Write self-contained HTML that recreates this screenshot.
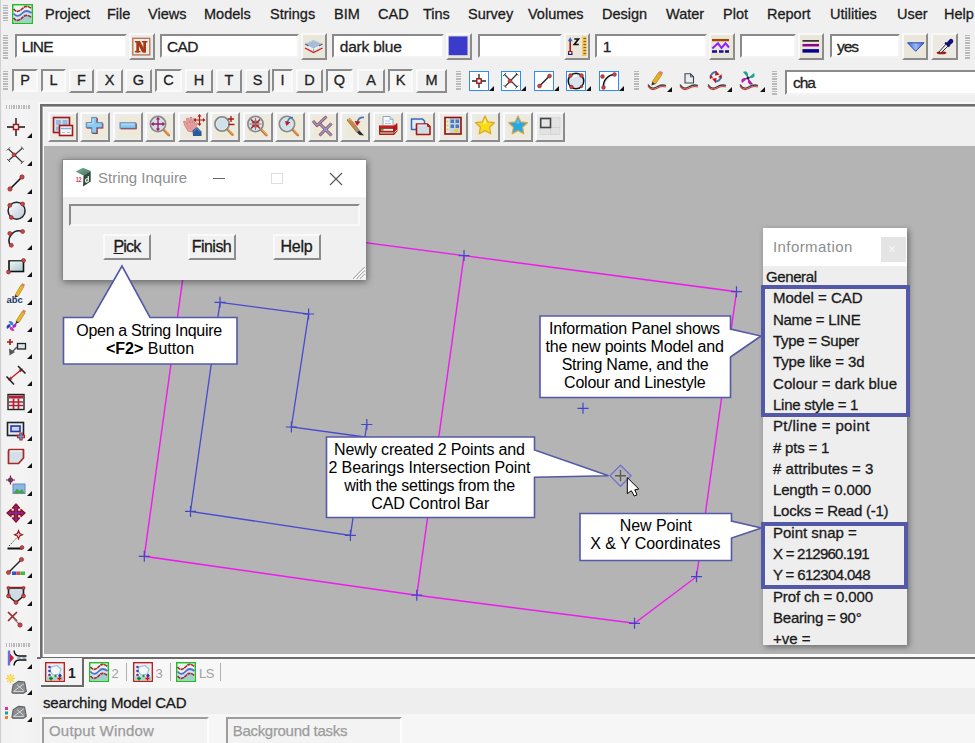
<!DOCTYPE html>
<html>
<head>
<meta charset="utf-8">
<style>
html,body{margin:0;padding:0;}
body{width:975px;height:743px;overflow:hidden;position:relative;background:#f0f0f0;font-family:"Liberation Sans",sans-serif;color:#1a1a1a;}
.abs{position:absolute;}
.menu{position:absolute;top:5px;font-size:14.5px;line-height:18px;color:#1c1c1c;white-space:nowrap;-webkit-text-stroke:0.3px #1c1c1c;}
.inp{position:absolute;box-sizing:border-box;background:#fff;border:2px solid;border-color:#8a8a8a #f4f4f4 #f4f4f4 #8a8a8a;font-size:15.5px;line-height:22px;padding-left:5px;color:#222;white-space:nowrap;overflow:hidden;-webkit-text-stroke:0.3px #222;}
.btn{position:absolute;box-sizing:border-box;background:#eae6d9;border:2px solid;border-color:#f8f8f8 #8c8c8c #8c8c8c #f8f8f8;}
.kb{position:absolute;box-sizing:border-box;top:69px;height:24px;background:#f1f1f1;border:2px solid;border-color:#fafafa #8c8c8c #8c8c8c #fafafa;font-size:14.5px;line-height:18px;text-align:center;color:#222;-webkit-text-stroke:0.3px #222;}
.kb.dn{border-color:#8c8c8c #fafafa #fafafa #8c8c8c;background:#f6f6f6;height:23px;}
.grip{position:absolute;background:repeating-linear-gradient(to bottom,#b8b8b8 0 1.200px,transparent 1.200px 2.500px);}
.gripv{position:absolute;background:repeating-linear-gradient(to right,#b8b8b8 0 1.200px,transparent 1.200px 2.500px);}
.tri{position:absolute;width:0;height:0;border-left:5px solid transparent;border-bottom:5px solid #111;}
.dbtn{position:absolute;top:234px;height:26px;box-sizing:border-box;background:#f1f1f1;border:2px solid;border-color:#fafafa #8c8c8c #8c8c8c #fafafa;font-size:16px;line-height:21px;text-align:center;color:#1a1a1a;-webkit-text-stroke:0.3px #1a1a1a;}
.irow{position:absolute;left:773px;font-size:15px;line-height:20px;color:#1a1a1a;white-space:nowrap;-webkit-text-stroke:0.3px #1a1a1a;}
.ct{font-family:"Liberation Sans",sans-serif;font-size:16px;fill:#000;text-anchor:middle;}
.vb::before{content:"";position:absolute;left:2.5px;top:1.5px;width:22px;height:22px;background:#eeead9;}
.vb{position:absolute;top:112px;width:30px;height:30px;box-sizing:border-box;background:#ebebeb;border:2px solid;border-color:#fbfbfb #8c8c8c #8c8c8c #fbfbfb;}
.vb.nb::before{display:none;}
.vb svg{position:absolute;left:0;top:-1px;}
</style>
</head>
<body>
<div class="abs" style="left:0;top:0;width:1px;height:743px;background:#cfcfcf;z-index:5;"></div>
<!-- MENU -->
<div id="menubar">
<div class="grip" style="left:3px;top:5px;width:5px;height:17px;"></div>
<div class="abs" style="left:12px;top:4px;width:21px;height:20px;"><svg width="21" height="20" viewBox="0 0 20 20" preserveAspectRatio="none"><rect x="0.700" y="0.700" width="18.600" height="18.600" fill="#eef2f4" stroke="#1fbf1f" stroke-width="1.400"/><path d="M1.500 14 C4 17.500 7 17 10 13.500 S16 11.500 18.500 13.500 V18.500 H1.500Z" fill="#9fd0cc"/><path d="M1.500 9.500 C4 13 7 12.500 10 9 S16 7 18.500 9 V13 C16 11 13 11 10 13.500 S4 17 1.500 14Z" fill="#cfe4f4"/><path d="M1.500 5 C4 8.500 7 8 10 4.500 S16 2.500 18.500 4.500" fill="none" stroke="#a03030" stroke-width="1.600" stroke-dasharray="3.500 0.500"/><path d="M1.500 9.500 C4 13 7 12.500 10 9 S16 7 18.500 9" fill="none" stroke="#5070c8" stroke-width="1.700"/><path d="M1.500 14 C4 17.500 7 17 10 13.500 S16 11.500 18.500 13.500" fill="none" stroke="#a03030" stroke-width="1.600" stroke-dasharray="3.500 0.500"/></svg></div>
<span class="menu" style="left:45px">Project</span>
<span class="menu" style="left:107px">File</span>
<span class="menu" style="left:148px">Views</span>
<span class="menu" style="left:204px">Models</span>
<span class="menu" style="left:270px">Strings</span>
<span class="menu" style="left:334px">BIM</span>
<span class="menu" style="left:378px">CAD</span>
<span class="menu" style="left:423px">Tins</span>
<span class="menu" style="left:468px">Survey</span>
<span class="menu" style="left:528px">Volumes</span>
<span class="menu" style="left:602px">Design</span>
<span class="menu" style="left:666px">Water</span>
<span class="menu" style="left:723px">Plot</span>
<span class="menu" style="left:767px">Report</span>
<span class="menu" style="left:830px">Utilities</span>
<span class="menu" style="left:897px">User</span>
<span class="menu" style="left:944px">Help</span>
</div>
<!-- CONTROL BAR ROW -->
<div id="row2">
<div class="grip" style="left:3px;top:35px;width:5px;height:24px;"></div>
<div class="inp" style="left:15px;top:34px;width:112px;height:24px;letter-spacing:-0.93px;padding-left:4.8px;">LINE</div>
<div class="btn" style="left:129px;top:33px;width:26px;height:27px;background:#ebebeb;"><svg class="abs" style="left:0;top:0" width="22" height="23" viewBox="0 0 22 23"><rect x="1.800" y="3.300" width="17" height="16.600" fill="#e6edf2" stroke="#c0703f" stroke-width="1.300"/><g fill="#a93a10"><rect x="5.300" y="6" width="2.700" height="11.400"/><rect x="12.300" y="6" width="2.700" height="11.400"/><path d="M5.300 6 H9 L15 17.400 H11.300 Z"/><rect x="3.900" y="6" width="5" height="1.500"/><rect x="3.900" y="15.900" width="5.500" height="1.500"/><rect x="10.900" y="6" width="5.500" height="1.500"/></g></svg></div>
<div class="inp" style="left:160px;top:34px;width:139px;height:24px;letter-spacing:-0.70px;padding-left:5.0px;">CAD</div>
<div class="btn" style="left:301px;top:33px;width:26px;height:27px;"><svg class="abs" style="left:0;top:0" width="22" height="23" viewBox="0 0 22 23"><path d="M2 13 L10.500 17.500 L19.500 13" fill="none" stroke="#d01818" stroke-width="1.300"/><path d="M2 11 L10.500 15 L19.500 11 L10.500 7.500Z" fill="#e8f0f8"/><path d="M2 9 L10.500 5 L19.500 9 L10.500 13.500 Z" fill="#a8bcd4"/><path d="M2 9 L10.500 5 L19.500 9" fill="none" stroke="#c8d8e8" stroke-width="0.800"/><path d="M2 9 L5.500 10.800 M19.500 9 L16 10.800" stroke="#5a6a7a" stroke-width="1.300"/><path d="M10.500 13.500V17" stroke="#7aa0c0" stroke-width="0.800"/></svg></div>
<div class="inp" style="left:332px;top:34px;width:112px;height:24px;letter-spacing:-0.22px;padding-left:5.8px;">dark blue</div>
<div class="btn" style="left:446px;top:33px;width:26px;height:27px;"><svg class="abs" style="left:0;top:0" width="22" height="23" viewBox="0 0 22 23"><rect x="0.700" y="1.400" width="18.800" height="18.800" fill="#3b3bcb"/></svg></div>
<div class="inp" style="left:478px;top:34px;width:84px;height:24px;"></div>
<div class="btn" style="left:564px;top:33px;width:26px;height:27px;"><svg class="abs" style="left:0;top:0" width="22" height="23" viewBox="0 0 22 23"><path d="M4.200 6 V16" stroke="#b01818" stroke-width="1.600"/><path d="M4.200 2.300 L1.800 6.300 H6.600 Z" fill="#2868c8"/><rect x="2" y="16" width="4.500" height="2" fill="#b01818"/><rect x="2" y="18" width="4.500" height="2" fill="#1010a0"/><rect x="3.300" y="17" width="1.900" height="2" fill="#e8f0f0"/><path d="M8.300 4 H12.500 L8.300 9.500 H12.800" fill="none" stroke="#111" stroke-width="1.700"/><rect x="16.300" y="1.500" width="4" height="19.500" fill="#f0c050"/><path d="M17.500 3.500h2.800M17.500 6.500h2.800M17.500 9.500h2.800M17.500 12.500h2.800M17.500 15.500h2.800M17.500 18.500h2.800" stroke="#7a5a10" stroke-width="0.900"/></svg></div>
<div class="inp" style="left:595px;top:34px;width:112px;height:24px;letter-spacing:0.00px;padding-left:5.8px;">1</div>
<div class="btn" style="left:709px;top:33px;width:26px;height:27px;"><svg class="abs" style="left:0;top:0" width="22" height="23" viewBox="0 0 22 23"><path d="M1 5.100 H18" stroke="#a04800" stroke-width="2.300"/><path d="M1.300 13.500 L7 8.300 L10.500 13 L14.500 8.300 L18 12.500" fill="none" stroke="#9020ff" stroke-width="2"/><path d="M1 16.600 H6 M8 16.600 H12.500 M14 16.600 H18" stroke="#10108a" stroke-width="2.500"/></svg></div>
<div class="inp" style="left:740px;top:34px;width:56px;height:24px;"></div>
<div class="btn" style="left:798px;top:33px;width:26px;height:27px;"><svg class="abs" style="left:0;top:0" width="22" height="23" viewBox="0 0 22 23"><path d="M2.500 5.900 H19" stroke="#222" stroke-width="1.600"/><path d="M2.500 10.200 H19" stroke="#900090" stroke-width="2.500"/><path d="M2.500 15.900 H19" stroke="#000090" stroke-width="3.500"/></svg></div>
<div class="inp" style="left:830px;top:34px;width:70px;height:24px;letter-spacing:-1.10px;padding-left:5.0px;">yes</div>
<div class="btn" style="left:902px;top:33px;width:26px;height:27px;"><svg class="abs" style="left:0;top:0" width="22" height="23" viewBox="0 0 22 23"><defs><linearGradient id="tg" x1="0" y1="0" x2="1" y2="0"><stop offset="0" stop-color="#3a66d8"/><stop offset="0.500" stop-color="#9ab8f4"/><stop offset="1" stop-color="#3a66d8"/></linearGradient></defs><path d="M3.500 7.800 H20 L11.700 16.300 Z" fill="url(#tg)" stroke="#2848b0" stroke-width="1" stroke-linejoin="round"/></svg></div>
<div class="btn" style="left:931px;top:33px;width:27px;height:27px;background:#ece9e2;"><svg class="abs" style="left:0;top:0" width="23" height="23" viewBox="0 0 23 23"><ellipse cx="8.500" cy="17.700" rx="4.800" ry="1.500" fill="#b01818"/><path d="M6 17 L13.500 8.500 L15.500 10.500 L8 18 Z" fill="#e4ecf0" stroke="#333" stroke-width="1"/><path d="M12.200 7.500 L16.500 11.500" stroke="#10106a" stroke-width="2.200"/><path d="M13.500 8 L16.500 4.500 Q18.500 3 20 5 Q21 7 19.500 8 L16.200 10.800 Z" fill="#10107a"/></svg></div>
<div class="grip" style="left:965px;top:35px;width:5px;height:24px;"></div>
</div>
<!-- ROW 3 -->
<div id="row3">
<div class="grip" style="left:3px;top:71px;width:5px;height:19px;"></div>
<div class="kb dn" style="left:12px;width:26px;">P</div>
<div class="kb dn" style="left:41px;width:25px;">L</div>
<div class="kb" style="left:69px;width:25px;">F</div>
<div class="kb" style="left:96px;width:27px;">X</div>
<div class="kb" style="left:125px;width:27px;">G</div>
<div class="kb dn" style="left:155px;width:27px;">C</div>
<div class="kb" style="left:185px;width:28px;">H</div>
<div class="kb" style="left:216px;width:26px;">T</div>
<div class="kb" style="left:245px;width:25px;">S</div>
<div class="kb dn" style="left:272px;width:21px;">I</div>
<div class="kb" style="left:296px;width:27px;">D</div>
<div class="kb dn" style="left:326px;width:27px;">Q</div>
<div class="kb" style="left:357px;width:28px;">A</div>
<div class="kb dn" style="left:388px;width:25px;">K</div>
<div class="kb" style="left:416px;width:31px;">M</div>
<div class="grip" style="left:456px;top:71px;width:5px;height:19px;"></div>
<div class="abs" style="left:468.5px;top:71px;width:20px;height:20px;box-sizing:border-box;border:1px solid #2f8cf7;background:#fff;"><svg class="abs" style="left:0;top:0" width="18" height="18" viewBox="0 0 18 18"><path d="M2 9h14M9 2v14" stroke="#222" stroke-width="1.300"/><rect x="6.800" y="6.800" width="4.400" height="4.400" fill="#fff" stroke="#a01010" stroke-width="1.400"/></svg></div><div class="tri" style="left:488.5px;top:86px;"></div><div class="abs" style="left:501px;top:71px;width:20px;height:20px;box-sizing:border-box;border:1px solid #2f8cf7;background:#fff;"><svg class="abs" style="left:0;top:0" width="18" height="18" viewBox="0 0 18 18"><path d="M2.500 2.500 L15 15 M15 2 L3 14.500" stroke="#333" stroke-width="1.200"/><path d="M13.500 0.500l3 3M1 4l3-3M1.500 13l3 3M13.500 16.500l3-3" stroke="#444" stroke-width="0.900"/><circle cx="8" cy="9" r="2" fill="#c04848" stroke="#8a2020" stroke-width="0.500"/></svg></div><div class="tri" style="left:521px;top:86px;"></div><div class="abs" style="left:533.5px;top:71px;width:20px;height:20px;box-sizing:border-box;border:1px solid #2f8cf7;background:#fff;"><svg class="abs" style="left:0;top:0" width="18" height="18" viewBox="0 0 18 18"><path d="M4.500 14 L14.500 4" stroke="#222" stroke-width="1.400"/><circle cx="4.5" cy="14" r="2" fill="#c04848" stroke="#8a2020" stroke-width="0.500"/><circle cx="14.5" cy="4" r="2" fill="#c04848" stroke="#8a2020" stroke-width="0.500"/></svg></div><div class="tri" style="left:553.5px;top:86px;"></div><div class="abs" style="left:566px;top:71px;width:20px;height:20px;box-sizing:border-box;border:1px solid #2f8cf7;background:#fff;"><svg class="abs" style="left:0;top:0" width="18" height="18" viewBox="0 0 18 18"><circle cx="9" cy="9" r="7.800" fill="#dbe4ec" stroke="#111" stroke-width="1.500"/><path d="M5 6 A5 5 0 0 1 10 4" stroke="#fff" stroke-width="1.600" fill="none"/><circle cx="3.5" cy="3.5" r="1.9" fill="#c04848" stroke="#8a2020" stroke-width="0.500"/><circle cx="14.5" cy="3.5" r="1.9" fill="#c04848" stroke="#8a2020" stroke-width="0.500"/><circle cx="4.5" cy="15" r="1.9" fill="#c04848" stroke="#8a2020" stroke-width="0.500"/><circle cx="14.5" cy="14.5" r="1.3" fill="#c04848" stroke="#8a2020" stroke-width="0.500"/></svg></div><div class="tri" style="left:586px;top:86px;"></div><div class="abs" style="left:599px;top:71px;width:20px;height:20px;box-sizing:border-box;border:1px solid #2f8cf7;background:#fff;"><svg class="abs" style="left:0;top:0" width="18" height="18" viewBox="0 0 18 18"><path d="M3.500 15 A12 12 0 0 1 15 3 A15 15 0 0 0 5.500 15Z" fill="#e8eef2"/><path d="M3.500 15 A 11.500 11.500 0 0 1 15 2.500" fill="none" stroke="#111" stroke-width="1.500"/><circle cx="3.5" cy="15.5" r="1.9" fill="#c04848" stroke="#8a2020" stroke-width="0.500"/><circle cx="2.5" cy="4.5" r="1.9" fill="#c04848" stroke="#8a2020" stroke-width="0.500"/><circle cx="14.5" cy="2.5" r="1.9" fill="#c04848" stroke="#8a2020" stroke-width="0.500"/></svg></div><div class="tri" style="left:619px;top:86px;"></div>
<div class="grip" style="left:634px;top:71px;width:5px;height:19px;"></div>
<svg class="abs" style="left:647px;top:82px" width="20" height="9" viewBox="0 0 20 9"><path d="M1 2.500 Q4.500 8 9.500 5 T19 3.500" fill="none" stroke="#3c3c3c" stroke-width="1.300"/><path d="M1 4 Q4.500 9.500 9.500 6.500 T19 5" fill="none" stroke="#c83c3c" stroke-width="1.100"/></svg><svg class="abs" style="left:648px;top:69px" width="20" height="18" viewBox="0 0 20 18"><path d="M4 13 L10.500 3.500 L14 5.500 L7.500 15 Z" fill="#e8b020" stroke="#a07010" stroke-width="0.600"/><path d="M10.500 3.500 L14 5.500 L15.200 3.500 L12 1.800Z" fill="#e08080"/><path d="M4 13 L3.500 16.500 L7.500 15Z" fill="#333"/></svg><div class="tri" style="left:667px;top:87px;"></div><svg class="abs" style="left:679px;top:82px" width="20" height="9" viewBox="0 0 20 9"><path d="M1 2.500 Q4.500 8 9.500 5 T19 3.500" fill="none" stroke="#3c3c3c" stroke-width="1.300"/><path d="M1 4 Q4.500 9.500 9.500 6.500 T19 5" fill="none" stroke="#c83c3c" stroke-width="1.100"/></svg><svg class="abs" style="left:684px;top:73px" width="11" height="11" viewBox="0 0 11 11"><path d="M1 0.800 H6.500 L9.500 3.800 V10 H1 Z" fill="#e4eef4" stroke="#444" stroke-width="1.100"/><path d="M6.500 0.800 V3.800 H9.500" fill="none" stroke="#444" stroke-width="0.900"/></svg><svg class="abs" style="left:707px;top:82px" width="20" height="9" viewBox="0 0 20 9"><path d="M1 2.500 Q4.500 8 9.500 5 T19 3.500" fill="none" stroke="#3c3c3c" stroke-width="1.300"/><path d="M1 4 Q4.500 9.500 9.500 6.500 T19 5" fill="none" stroke="#c83c3c" stroke-width="1.100"/></svg><svg class="abs" style="left:709px;top:70px" width="13.500" height="13.500" viewBox="0 0 16 16"><path d="M2 9 A6 6 0 0 1 9 2.500" fill="none" stroke="#3878c0" stroke-width="2.400"/><path d="M14 7.500 A6 6 0 0 1 7 13.500" fill="none" stroke="#3878c0" stroke-width="2.400"/><path d="M8 0.500 L12.500 5.500 L7 6.500Z" fill="#c01818"/><path d="M8 15.500 L3.500 10.500 L9 9.500Z" fill="#c01818"/><path d="M1 6 L5 8.500 L1 11Z" fill="#c01818"/><path d="M15 5 L11 8 L15 10.500Z" fill="#c01818"/></svg><div class="tri" style="left:727px;top:87px;"></div><svg class="abs" style="left:739px;top:82px" width="20" height="9" viewBox="0 0 20 9"><path d="M1 2.500 Q4.500 8 9.500 5 T19 3.500" fill="none" stroke="#3c3c3c" stroke-width="1.300"/><path d="M1 4 Q4.500 9.500 9.500 6.500 T19 5" fill="none" stroke="#c83c3c" stroke-width="1.100"/></svg><svg class="abs" style="left:740px;top:70px" width="16" height="16" viewBox="0 0 16 16"><path d="M8 8 L3 2 Q7 0 8 4Z" fill="#20a098"/><path d="M8 8 L14 3 Q16 7 12 8Z" fill="#20a098"/><path d="M8 8 L13 14 Q9 16 8 12Z" fill="#b020b0"/><path d="M8 8 L2 13 Q0 9 4 8Z" fill="#b020b0"/><circle cx="8" cy="8" r="1.500" fill="#222"/></svg><div class="tri" style="left:760px;top:87px;"></div>
<div class="grip" style="left:772px;top:71px;width:5px;height:24px;"></div>
<div class="inp" style="left:785px;top:70px;width:200px;height:25px;line-height:22px;letter-spacing:-1.00px;padding-left:6.0px;">cha</div>
</div>
<!-- LEFT TOOLBAR -->
<div id="lefttb">
<div class="abs" style="left:0px;top:100px;width:37px;height:643px;background:linear-gradient(to right,#e4e4e4 0,#f2f2f2 2px,#f4f4f4 60%,#f0f0f0);"></div>
<div class="gripv" style="left:6px;top:105px;width:24px;height:4px;"></div>
<div class="gripv" style="left:6px;top:642.5px;width:24px;height:4px;"></div>
<div class="abs" style="left:4px;top:115px;width:24px;height:24px;"><svg width="24" height="24" viewBox="0 0 24 24"><path d="M3 12h18M12 3v18" stroke="#111" stroke-width="1.400"/><rect x="9.500" y="9.500" width="5" height="5" fill="#fff" stroke="#b01818" stroke-width="1.500"/></svg></div><div class="tri" style="left:26.500px;top:132.5px;"></div>
<div class="abs" style="left:4px;top:143px;width:24px;height:24px;"><svg width="24" height="24" viewBox="0 0 24 24"><path d="M4.500 6 L18.500 19.500 M18.500 5 L4.500 17.500" stroke="#3a3a3a" stroke-width="1.200"/><path d="M16.800 3.500l3.200 3.200M2.800 7.500l3.200-3.200M3 16l3 3M16.800 21l3.200-3.200" stroke="#555" stroke-width="1"/><circle cx="10" cy="11.8" r="1.9" fill="#c04848" stroke="#8a2020" stroke-width="0.600"/></svg></div><div class="tri" style="left:26.500px;top:160.5px;"></div>
<div class="abs" style="left:4px;top:171px;width:24px;height:24px;"><svg width="24" height="24" viewBox="0 0 24 24"><path d="M6 18 L18 6" stroke="#111" stroke-width="1.600"/><circle cx="6" cy="18" r="2.2" fill="#c04848" stroke="#8a2020" stroke-width="0.600"/><circle cx="18" cy="6" r="2.2" fill="#c04848" stroke="#8a2020" stroke-width="0.600"/></svg></div><div class="tri" style="left:26.500px;top:188.5px;"></div>
<div class="abs" style="left:4px;top:199px;width:24px;height:24px;"><svg width="24" height="24" viewBox="0 0 24 24"><defs><linearGradient id="cg" x1="0" y1="0" x2="1" y2="1"><stop offset="0" stop-color="#fff"/><stop offset="1" stop-color="#b8c8d8"/></linearGradient></defs><circle cx="12.600" cy="11.800" r="8.500" fill="url(#cg)" stroke="#222" stroke-width="1.500"/><circle cx="5.8" cy="6.3" r="2" fill="#c04848" stroke="#8a2020" stroke-width="0.600"/><circle cx="18.6" cy="5" r="2" fill="#c04848" stroke="#8a2020" stroke-width="0.600"/><circle cx="7.3" cy="18.5" r="2" fill="#c04848" stroke="#8a2020" stroke-width="0.600"/></svg></div><div class="tri" style="left:26.500px;top:216.5px;"></div>
<div class="abs" style="left:4px;top:227px;width:24px;height:24px;"><svg width="24" height="24" viewBox="0 0 24 24"><path d="M18.500 4.500 A10 10 0 0 0 6.500 19 L13 17 Q12 10 18.500 8 Z" fill="#eef2f6"/><path d="M18.500 4.500 A10 10 0 0 0 6.500 19" fill="none" stroke="#222" stroke-width="1.600"/><circle cx="5.8" cy="6.4" r="2" fill="#c04848" stroke="#8a2020" stroke-width="0.600"/><circle cx="18.6" cy="4.5" r="2" fill="#c04848" stroke="#8a2020" stroke-width="0.600"/><circle cx="7.3" cy="18.3" r="2" fill="#c04848" stroke="#8a2020" stroke-width="0.600"/></svg></div><div class="tri" style="left:26.500px;top:244.5px;"></div>
<div class="abs" style="left:4px;top:254px;width:24px;height:24px;"><svg width="24" height="24" viewBox="0 0 24 24"><defs><linearGradient id="rg" x1="0" y1="0" x2="1" y2="1"><stop offset="0" stop-color="#eef6f6"/><stop offset="1" stop-color="#a8c8cc"/></linearGradient></defs><rect x="5" y="7" width="14.500" height="10.500" fill="url(#rg)" stroke="#111" stroke-width="1.600"/><path d="M6 8h12.500" stroke="#eef6f8" stroke-width="1"/><circle cx="19.5" cy="6.5" r="2" fill="#c04848" stroke="#8a2020" stroke-width="0.600"/><circle cx="4.5" cy="18" r="2" fill="#c04848" stroke="#8a2020" stroke-width="0.600"/></svg></div><div class="tri" style="left:26.500px;top:271.5px;"></div>
<div class="abs" style="left:4px;top:282px;width:24px;height:24px;"><svg width="24" height="24" viewBox="0 0 24 24"><path d="M11 13 L17 3 L20 4.500 L14 14.500 Z" fill="#e8b828" stroke="#a87818" stroke-width="0.600"/><path d="M17 3 L20 4.500 L21 2.500 L18.200 1.200Z" fill="#d87878"/><path d="M11 13 L10.500 16 L14 14.500Z" fill="#333"/><text x="2.500" y="21" font-family="Liberation Sans" font-size="9.500" font-weight="bold" fill="#1c3a6a">abc</text></svg></div><div class="tri" style="left:26.500px;top:299.5px;"></div>
<div class="abs" style="left:4px;top:309px;width:24px;height:24px;"><svg width="24" height="24" viewBox="0 0 24 24"><path d="M12 12 L18 2.500 L21 4 L15 13.500 Z" fill="#e8b828" stroke="#a87818" stroke-width="0.600"/><path d="M18 2.500 L21 4 L22 2 L19.200 0.800Z" fill="#d87878"/><path d="M12 12 L11.500 15 L15 13.500Z" fill="#333"/><g transform="translate(7.500,17)"><path d="M0 0 L-3 -4.500 Q1 -6 2 -2 Z" fill="#3880e0"/><path d="M0 0 L4.500 -3 Q6 1 2 2 Z" fill="#9030c0"/><path d="M0 0 L3 4.500 Q-1 6 -2 2 Z" fill="#d030b0"/><path d="M0 0 L-4.500 3 Q-6 -1 -2 -2 Z" fill="#3040c0"/><circle r="1.100" fill="#f4f0fa"/></g></svg></div><div class="tri" style="left:26.500px;top:326.5px;"></div>
<div class="abs" style="left:4px;top:336px;width:24px;height:24px;"><svg width="24" height="24" viewBox="0 0 24 24"><path d="M3 6h6M6 3v6" stroke="#b01818" stroke-width="1.600"/><rect x="13.500" y="7.500" width="8" height="5.500" fill="#d8e4ec" stroke="#222" stroke-width="1.300"/><path d="M13 11 L7 17" stroke="#555" stroke-width="1.500"/><path d="M5 12.500 L5.500 19.500 L11 16 Z" fill="#555"/></svg></div><div class="tri" style="left:26.500px;top:353.5px;"></div>
<div class="abs" style="left:4px;top:363px;width:24px;height:24px;"><svg width="24" height="24" viewBox="0 0 24 24"><path d="M6 16 L17 7" stroke="#c02828" stroke-width="1.400"/><path d="M4 17.500 l4.500-1.200 l-2.300-2.800zM19 5.500 l-4.500 1.200 l2.300 2.800z" fill="#c02828"/><path d="M2.500 13.500 L10 21.500 M14 3 L21.500 10.500" stroke="#222" stroke-width="1.600"/></svg></div><div class="tri" style="left:26.500px;top:380.5px;"></div>
<div class="abs" style="left:4px;top:390px;width:24px;height:24px;"><svg width="24" height="24" viewBox="0 0 24 24"><rect x="4" y="4.500" width="16" height="15" fill="#f4f0f0" stroke="#222" stroke-width="1.400"/><rect x="5" y="5.500" width="14" height="3" fill="#b02030"/><path d="M5 12h14M5 15.500h14M9.500 8.500v10.500M14.500 8.500v10.500" stroke="#b02030" stroke-width="1.700"/></svg></div><div class="tri" style="left:26.500px;top:407.5px;"></div>
<div class="abs" style="left:4px;top:418px;width:24px;height:24px;"><svg width="24" height="24" viewBox="0 0 24 24"><rect x="3.500" y="4.500" width="16" height="13" fill="#e8ecf0" stroke="#222" stroke-width="1.600"/><rect x="7" y="8" width="9" height="5.500" fill="#c8d4f0" stroke="#2838a8" stroke-width="1.600"/><path d="M13 18.500h8M17 14.500v8" stroke="#c02020" stroke-width="3.400"/><path d="M14 18.500h6M17 15.500v6" stroke="#58a0e0" stroke-width="1.600"/></svg></div><div class="tri" style="left:26.500px;top:435.5px;"></div>
<div class="abs" style="left:4px;top:445px;width:24px;height:24px;"><svg width="24" height="24" viewBox="0 0 24 24"><path d="M4.500 6 Q4.500 4.500 6 4.500 H19.500 V13 L14.500 18.500 H4.500 Z" fill="#d4e0e8" stroke="#a82828" stroke-width="1.700" stroke-linejoin="round"/><path d="M6 6 H18" stroke="#f4f8fa" stroke-width="1"/></svg></div><div class="tri" style="left:26.500px;top:462.5px;"></div>
<div class="abs" style="left:4px;top:473px;width:24px;height:24px;"><svg width="24" height="24" viewBox="0 0 24 24"><rect x="9" y="11" width="12" height="9.500" fill="#88b8e8" stroke="#7088b8" stroke-width="1"/><path d="M9.500 20 L13 15.500 L15.500 18 L18 16 L20.500 20Z" fill="#48a838"/><path d="M2 7h9M6.500 2.500v9" stroke="#a01818" stroke-width="1.200"/><circle cx="6.500" cy="7" r="2.200" fill="#3848a8" stroke="#a01818" stroke-width="0.800"/></svg></div><div class="tri" style="left:26.500px;top:490.5px;"></div>
<div class="abs" style="left:4px;top:501px;width:24px;height:24px;"><svg width="24" height="24" viewBox="0 0 24 24"><path d="M12 3 L15.500 7 H13.500 V10.500 H17 V8.500 L21 12 L17 15.500 V13.500 H13.500 V17 H15.500 L12 21 L8.500 17 H10.500 V13.500 H7 V15.500 L3 12 L7 8.500 V10.500 H10.500 V7 H8.500 Z" fill="#8a2898" stroke="#901020" stroke-width="1.300" stroke-linejoin="round"/></svg></div><div class="tri" style="left:26.500px;top:518.5px;"></div>
<div class="abs" style="left:4px;top:528px;width:24px;height:24px;"><svg width="24" height="24" viewBox="0 0 24 24"><path d="M3.500 20.500 H18" stroke="#111" stroke-width="2"/><circle cx="18" cy="19.5" r="1.9" fill="#c04848" stroke="#8a2020" stroke-width="0.600"/><path d="M5 18 L13.500 9" stroke="#444" stroke-width="1" stroke-dasharray="1.500 1.500"/><path d="M14.500 2.500 L15.700 5.500 L18.500 6.700 L15.700 7.900 L14.500 11 L13.300 7.900 L10.500 6.700 L13.300 5.500 Z" fill="#e8c8c8" stroke="#a01818" stroke-width="1.100"/></svg></div><div class="tri" style="left:26.500px;top:545.5px;"></div>
<div class="abs" style="left:4px;top:555px;width:24px;height:24px;"><svg width="24" height="24" viewBox="0 0 24 24"><path d="M5 17 L17 5" stroke="#222" stroke-width="1.500"/><circle cx="17.5" cy="4.5" r="2.1" fill="#c04848" stroke="#8a2020" stroke-width="0.600"/><circle cx="4.5" cy="17.5" r="2.1" fill="#c04848" stroke="#8a2020" stroke-width="0.600"/><rect x="8" y="16.500" width="4.500" height="3.500" fill="#2858d8"/><rect x="12.500" y="16.500" width="4" height="3.500" fill="#e04848"/><rect x="16.500" y="16.500" width="4.500" height="3.500" fill="#38c038"/></svg></div><div class="tri" style="left:26.500px;top:572.5px;"></div>
<div class="abs" style="left:4px;top:583px;width:24px;height:24px;"><svg width="24" height="24" viewBox="0 0 24 24"><path d="M4.500 5 H19.500 V13 L12 19.500 L4.500 13 Z" fill="#d0dce4" stroke="#222" stroke-width="1.600" stroke-linejoin="round"/><path d="M3 4.500 H21" stroke="#901818" stroke-width="1.400"/><circle cx="4.5" cy="13" r="2" fill="#c04848" stroke="#8a2020" stroke-width="0.600"/><circle cx="19.5" cy="13" r="2" fill="#c04848" stroke="#8a2020" stroke-width="0.600"/><circle cx="12" cy="19.5" r="2" fill="#c04848" stroke="#8a2020" stroke-width="0.600"/><circle cx="4.5" cy="5" r="1.6" fill="#c04848" stroke="#8a2020" stroke-width="0.600"/><circle cx="19.5" cy="5" r="1.6" fill="#c04848" stroke="#8a2020" stroke-width="0.600"/></svg></div><div class="tri" style="left:26.500px;top:600.5px;"></div>
<div class="abs" style="left:4px;top:608px;width:24px;height:24px;"><svg width="24" height="24" viewBox="0 0 24 24"><path d="M4 4 L13 13 M13 4 L4 13" stroke="#a02828" stroke-width="1.700"/><path d="M10 11 L16 17" stroke="#888" stroke-width="1.200"/><circle cx="16" cy="17" r="2.2" fill="#c04848" stroke="#8a2020" stroke-width="0.600"/></svg></div><div class="tri" style="left:26.500px;top:625.5px;"></div>
<div class="abs" style="left:4px;top:646px;width:24px;height:24px;"><svg width="24" height="24" viewBox="0 0 24 24"><path d="M5 4.500 V19.500" stroke="#6870d8" stroke-width="2.400"/><path d="M6 7.500 L10 12 L6 16.500 Z" fill="#e01828"/><path d="M10 5.500 Q11 10.500 15 10.500 H22.500 V13.500 H15 Q11 13.500 10 18.500 L12.500 12Z" fill="#d4e6ee"/><path d="M10 4.500 Q10.500 10 15.500 10 H22.500 M10 19.500 Q10.500 14 15.500 14 H22.500" fill="none" stroke="#111" stroke-width="1.500"/><path d="M13.500 12h3M18.500 12h3" stroke="#666" stroke-width="0.900"/></svg></div><div class="tri" style="left:26.500px;top:663.5px;"></div>
<div class="abs" style="left:4px;top:672px;width:24px;height:24px;"><svg width="24" height="24" viewBox="0 0 24 24"><g transform="translate(4.500,5) scale(0.850)"><path d="M4 18 L5.500 9 L12 5 L19 6 L21 17 L18 19 L5 19 Z" fill="#8a8e90" stroke="#5a5e60" stroke-width="1.200" stroke-linejoin="round"/><path d="M6 17 L18 8 M10 9 L18 16 M6 17 H18" stroke="#d8dcdc" stroke-width="1.100" fill="none"/></g><path d="M2 6.500h9M6.500 2v9M3.300 3.300l6.400 6.400M9.700 3.300l-6.400 6.400" stroke="#f0d040" stroke-width="1.500"/><rect x="4" y="4" width="5" height="5" fill="#f8e060"/></svg></div><div class="tri" style="left:26.500px;top:689.5px;"></div>
<div class="abs" style="left:4px;top:699px;width:24px;height:24px;"><svg width="24" height="24" viewBox="0 0 24 24"><g transform="translate(4.500,3) scale(0.850)"><path d="M4 18 L5.500 9 L12 5 L19 6 L21 17 L18 19 L5 19 Z" fill="#8a8e90" stroke="#5a5e60" stroke-width="1.200" stroke-linejoin="round"/><path d="M6 17 L18 8 M10 9 L18 16 M6 17 H18" stroke="#d8dcdc" stroke-width="1.100" fill="none"/></g><rect x="1" y="8" width="3" height="3" fill="#f028a0"/><rect x="1" y="12.500" width="3" height="3" fill="#20a090"/><rect x="1" y="17" width="3" height="3" fill="#f08030"/></svg></div><div class="tri" style="left:26.500px;top:716.5px;"></div>
</div>
<!-- VIEW -->
<div id="view">
<div class="abs" style="left:37.500px;top:101.500px;width:940px;height:555.500px;background:#f8f8f8;"></div>
<div class="abs" style="left:40px;top:104px;width:940px;height:553px;background:#6e6e6e;"></div>
<div class="abs" style="left:42px;top:106px;width:940px;height:551px;background:#a4a4a4;"></div>
<div class="abs" style="left:43px;top:107px;width:940px;height:550px;background:#fbfbfb;"></div>
<div class="abs" style="left:44px;top:108px;width:940px;height:46px;background:#f0f0f0;"></div>

<div class="abs" id="canvas" style="left:44px;top:146px;width:931px;height:508px;background:#b4b4b4;"></div>
<div id="vtb"><div class="vb" id="vb0" style="left:48px;"><svg width="26" height="26" viewBox="0 0 26 26"><rect x="3.5" y="4.5" width="16" height="15" fill="#d4e4f0" stroke="#a01818" stroke-width="1.6"/><rect x="6" y="7" width="5" height="5" fill="#9ab8dc"/><rect x="12.5" y="7" width="5" height="5" fill="#9ab8dc"/><rect x="6" y="13.5" width="5" height="4" fill="#9ab8dc"/><rect x="9.5" y="12.5" width="13" height="10" fill="#f4f8fc" stroke="#a01818" stroke-width="1.6"/><path d="M11 15.5h10" stroke="#8aa8d0" stroke-width="1.4"/><path d="M12 19.5h3M17 19.5h3" stroke="#a8c0dc" stroke-width="1.2"/></svg></div><div class="vb" id="vb1" style="left:80px;"><svg width="26" height="26" viewBox="0 0 26 26"><path d="M10.300 5h5.400v5.200h5.600v5.400h-5.600V21h-5.400v-5.400H4.800v-5.400h5.500z" fill="#a81010"/><path d="M9.700 4.400h5v5.200h5.600v5h-5.600V20h-5v-5.400H4.200v-5h5.500z" fill="#8ccaf2" stroke="#5c7cae" stroke-width="0.900" stroke-linejoin="round"/><path d="M11 6v4.800h-5.500" fill="none" stroke="#c4e4fa" stroke-width="1"/></svg></div><div class="vb" id="vb2" style="left:113px;"><svg width="26" height="26" viewBox="0 0 26 26"><rect x="5.700" y="10.500" width="16" height="5.800" fill="#a81010"/><rect x="5" y="9.800" width="15.800" height="5.400" fill="#8ccaf2" stroke="#5c7cae" stroke-width="0.900"/><path d="M6 11.200h13.500" stroke="#c4e4fa" stroke-width="0.900"/></svg></div><div class="vb" id="vb3" style="left:145px;"><svg width="26" height="26" viewBox="0 0 26 26"><path d="M16.25 16.25 L21.85 22.05" stroke="#c87a3a" stroke-width="2.6" stroke-linecap="round"/><path d="M17.25 16.45 L22.05 21.65" stroke="#e8b888" stroke-width="0.9" stroke-linecap="round"/><circle cx="11" cy="11" r="7.5" fill="#cfe2ea" stroke="#8a8a8a" stroke-width="2"/><circle cx="11" cy="11" r="6.3" fill="none" stroke="#e8f2f6" stroke-width="0.8"/><path d="M5.5 11h11M11 5.5v11" stroke="#a01860" stroke-width="1.3"/><path d="M11 3.8l-2.2 2.8h4.4zM11 18.2l-2.2-2.8h4.4zM3.8 11l2.8-2.2v4.4zM18.2 11l-2.8-2.2v4.4z" fill="#a01860"/></svg></div><div class="vb" id="vb4" style="left:178px;"><svg width="26" height="26" viewBox="0 0 26 26"><path d="M5 13 L3.5 8.5 L5 8 L7 11 L6.5 5.5 L8.2 5.2 L9.6 10 L10 4.3 L11.8 4.3 L12.2 10 L13.6 5.3 L15.2 5.8 L14.4 11.5 L16.5 9.5 L17.8 10.6 L14.5 16.5 L12 19 L8 18 Z" fill="#e8a0a0" stroke="#c07878" stroke-width="0.7"/><path d="M7.5 11 L8 16M10.3 10.5L10.3 16M12.5 11L12 16" stroke="#d08888" stroke-width="0.6"/><path d="M12.5 17.5 L17 14 L21.5 18.5 L21.5 23 L13 23 Z" fill="#2a5a9a"/><path d="M13.5 18.5 L17 15.5 L20.5 19" fill="none" stroke="#6a9ad0" stroke-width="0.8"/><path d="M15 7h9M19.5 2.5v9" stroke="#b01818" stroke-width="1.2"/><path d="M19.5 1l-2 2.6h4zM19.5 13l-2-2.6h4zM13.5 7l2.6-2v4zM25.5 7l-2.6-2v4z" fill="#b01818"/></svg></div><div class="vb" id="vb5" style="left:210px;"><svg width="26" height="26" viewBox="0 0 26 26"><path d="M14.899999999999999 15.899999999999999 L20.5 21.7" stroke="#c87a3a" stroke-width="2.6" stroke-linecap="round"/><path d="M15.899999999999999 16.099999999999998 L20.7 21.299999999999997" stroke="#e8b888" stroke-width="0.9" stroke-linecap="round"/><circle cx="10" cy="11" r="7" fill="#cfe2ea" stroke="#8a8a8a" stroke-width="2"/><circle cx="10" cy="11" r="5.8" fill="none" stroke="#e8f2f6" stroke-width="0.8"/><path d="M16 6h6M19 3v6" stroke="#a01818" stroke-width="1.3"/><path d="M16.5 11.5h6" stroke="#a01818" stroke-width="1.4"/></svg></div><div class="vb" id="vb6" style="left:243px;"><svg width="26" height="26" viewBox="0 0 26 26"><path d="M15.75 16.25 L21.35 22.05" stroke="#c87a3a" stroke-width="2.6" stroke-linecap="round"/><path d="M16.75 16.45 L21.55 21.65" stroke="#e8b888" stroke-width="0.9" stroke-linecap="round"/><circle cx="10.5" cy="11" r="7.5" fill="#cfe2ea" stroke="#8a8a8a" stroke-width="2"/><circle cx="10.5" cy="11" r="6.3" fill="none" stroke="#e8f2f6" stroke-width="0.8"/><path d="M6 6.5l3.2 3.2M15 6.5l-3.2 3.2M6 15.5l3.2-3.2M15 15.5l-3.2-3.2" stroke="#c01818" stroke-width="1.4"/><path d="M10 10.5L6.8 10L9.5 7.3zM11 10.5L14.2 10L11.5 7.3zM10 11.5L6.800 12L9.5 14.700zM11 11.500L14.200 12L11.500 14.700z" fill="#c01818"/><path d="M10.5 5v12M4.500 11h12" stroke="#555" stroke-width="0.7"/></svg></div><div class="vb" id="vb7" style="left:275px;"><svg width="26" height="26" viewBox="0 0 26 26"><path d="M15.25 16.25 L20.85 22.05" stroke="#c87a3a" stroke-width="2.6" stroke-linecap="round"/><path d="M16.25 16.45 L21.05 21.65" stroke="#e8b888" stroke-width="0.9" stroke-linecap="round"/><circle cx="10" cy="11" r="7.5" fill="#cfe2ea" stroke="#8a8a8a" stroke-width="2"/><circle cx="10" cy="11" r="6.3" fill="none" stroke="#e8f2f6" stroke-width="0.8"/><path d="M16 4.500 Q11.500 4.500 10.500 9" fill="none" stroke="#4a78b8" stroke-width="1.6"/><path d="M8 8 L13.300 9.200 L9.500 13 Z" fill="#c01818"/></svg></div><div class="vb" id="vb8" style="left:308px;"><svg width="26" height="26" viewBox="0 0 26 26"><path d="M3 8 L7 12.500 L16.500 3.500" fill="none" stroke="#b83030" stroke-width="2.800"/><path d="M3 8 L7 12.500 L16.500 3.500" fill="none" stroke="#78a8e0" stroke-width="1.500"/><path d="M10 11 L21.500 22.500 M21.500 10.500 L9.500 22.500" fill="none" stroke="#b83030" stroke-width="3"/><path d="M10 11 L21.500 22.500 M21.500 10.500 L9.500 22.500" fill="none" stroke="#78a8e0" stroke-width="1.700"/></svg></div><div class="vb" id="vb9" style="left:340px;"><svg width="26" height="26" viewBox="0 0 26 26"><path d="M5 7 L8 5.500 L17 17 L14.500 19 Z" fill="#c8884a" stroke="#8a5a2a" stroke-width="0.700"/><path d="M6 7 L8 6 L10 8.500" stroke="#e8c090" stroke-width="0.800" fill="none"/><path d="M14.500 19 L17 17 L22 22.500 L17.500 22 Z" fill="#2a2a2a"/><path d="M13.500 17.500 L16 15.500 L17.500 17.500 L15 19.500Z" fill="#909090"/><path d="M22 4.500 Q16.500 4 15.500 9" fill="none" stroke="#4a78b8" stroke-width="1.700"/><path d="M12.500 8 L18.500 8.500 L15 13 Z" fill="#c01818"/></svg></div><div class="vb" id="vb10" style="left:373px;"><svg width="26" height="26" viewBox="0 0 26 26"><path d="M8 3.500 H15 L18 6.500 V13 H8 Z" fill="#f8fbff" stroke="#88a8d0" stroke-width="1"/><path d="M15 3.500 V6.500 H18" fill="#c8daf0" stroke="#88a8d0" stroke-width="0.800"/><path d="M10 8h5M10 10.500h6" stroke="#a8c4e8" stroke-width="0.900"/><path d="M4.500 12.500 H19 L22 10.500 V18 L19 21.500 H4.500 Z" fill="#c02020" stroke="#801010" stroke-width="0.800"/><path d="M4.500 12.500 H19 L22 10.500" fill="none" stroke="#f08080" stroke-width="0.800"/><rect x="6" y="15.500" width="12.500" height="2.600" fill="#f0f0e8" stroke="#801010" stroke-width="0.600"/><rect x="6.500" y="15.800" width="2" height="1.800" fill="#30a030"/><path d="M5 20 H19 L22 17" fill="none" stroke="#e8d8d0" stroke-width="1"/><path d="M19 12.500 V21.500" stroke="#801010" stroke-width="0.700"/></svg></div><div class="vb" id="vb11" style="left:405px;"><svg width="26" height="26" viewBox="0 0 26 26"><path d="M4.500 6 H15.500 L17.500 8 V16.500 H4.500 Z" fill="#e0ecf8" stroke="#3868b8" stroke-width="1.500" stroke-linejoin="round"/><path d="M9.500 11 H20.500 L23 13.500 V21.500 H9.500 Z" fill="#d0dde6" stroke="#a81818" stroke-width="1.600" stroke-linejoin="round"/><path d="M10.500 12 H20 L22 14" fill="none" stroke="#f4f8fb" stroke-width="0.900"/><path d="M20.500 11 V13.500 H23" fill="none" stroke="#a81818" stroke-width="1"/></svg></div><div class="vb" id="vb12" style="left:438px;"><svg width="26" height="26" viewBox="0 0 26 26"><rect x="5" y="4.500" width="16" height="16.500" fill="#c8d4dc" stroke="#901010" stroke-width="1.600"/><rect x="6" y="5.500" width="3.500" height="14.500" fill="#e8ecf0"/><g fill="#4a78c0"><rect x="10.500" y="6.500" width="3.500" height="3.500"/><rect x="15.500" y="6.500" width="3.500" height="3.500"/><rect x="10.500" y="11.500" width="3.500" height="3.500"/><rect x="15.500" y="11.500" width="3.500" height="3.500"/></g><g fill="#e8d030"><rect x="6.500" y="7.500" width="2" height="2"/><rect x="6.500" y="11.500" width="2" height="2"/><rect x="6.500" y="15.500" width="2" height="2"/><rect x="14.500" y="16" width="3.500" height="3.500"/></g></svg></div><div class="vb" id="vb13" style="left:470px;"><svg width="26" height="26" viewBox="0 0 26 26"><path d="M13.0 2.9 L15.8 8.9 L22.4 9.7 L17.6 14.3 L18.8 20.8 L13.0 17.6 L7.2 20.8 L8.4 14.3 L3.6 9.7 L10.2 8.9 Z" fill="#f8dc18" stroke="#d8a828" stroke-width="1.200" stroke-linejoin="round"/><path d="M13 5.500 L14.800 10.500 L11 10.600 Z" fill="#fff8b0" opacity="0.800"/></svg></div><div class="vb" id="vb14" style="left:503px;"><svg width="26" height="26" viewBox="0 0 26 26"><path d="M13.0 2.9 L15.8 8.9 L22.4 9.7 L17.6 14.3 L18.8 20.8 L13.0 17.6 L7.2 20.8 L8.4 14.3 L3.6 9.7 L10.2 8.9 Z" fill="#28a8e0" stroke="#d0a860" stroke-width="1.200" stroke-linejoin="round"/><path d="M13 5.500 L14.800 10.500 L11 10.600 Z" fill="#70c8f0" opacity="0.800"/></svg></div><div class="vb nb" id="vb15" style="left:535px;"><svg width="26" height="26" viewBox="0 0 26 26"><rect x="3" y="4.800" width="20" height="16.600" fill="#e2e2e2" stroke="#d4d4d4" stroke-width="0.800"/><path d="M13.500 4.800 V21.400 M3 14.500 H23" stroke="#d0d0d0" stroke-width="1"/><rect x="3.700" y="5.500" width="9.800" height="9" fill="#e4e4e4" stroke="#444" stroke-width="1.600"/></svg></div></div>
<svg class="abs" style="left:0;top:0" width="975" height="743" viewBox="0 0 975 743">
<g fill="none" stroke="#f01af0" stroke-width="1.4">
<path d="M191 219.700 L464 255.600 L736.500 291.700 L696.500 576.700 L634.500 623.300 L416.800 595.200 L144.300 556.300 Z"/>
<path d="M464 255.600 L416.800 595.200"/>
</g>
<g fill="none" stroke="#4a4ad0" stroke-width="1.3">
<path d="M220 302.300 L308.600 314 L291.400 427 L372 438"/>
<path d="M366.800 424.500 L350.400 535.400 L190.500 511.400 L220 302.300"/>
</g>
<g fill="none" stroke="#4444c8" stroke-width="1.2"><path d="M458.5 255.6H469.5M464.0 250.1V261.1"/><path d="M731.0 291.7H742.0M736.5 286.2V297.2"/><path d="M214.5 302.3H225.5M220.0 296.8V307.8"/><path d="M303.1 314.0H314.1M308.6 308.5V319.5"/><path d="M361.3 424.5H372.3M366.8 419.0V430.0"/><path d="M285.9 427.0H296.9M291.4 421.5V432.5"/><path d="M577.5 408.3H588.5M583.0 402.8V413.8"/><path d="M185.0 511.4H196.0M190.5 505.9V516.9"/><path d="M344.9 535.4H355.9M350.4 529.9V540.9"/><path d="M138.8 556.3H149.8M144.3 550.8V561.8"/><path d="M691.0 576.7H702.0M696.5 571.2V582.2"/><path d="M411.3 595.2H422.3M416.8 589.7V600.7"/><path d="M629.0 623.3H640.0M634.5 617.8V628.8"/></g>
</svg>
<div id="dialog">
<div class="abs" style="left:62px;top:159px;width:304px;height:121px;background:#f0f0f0;box-shadow:1px 2px 7px rgba(0,0,0,.45);border-left:1px solid #858585;border-top:1px solid #8e8e8e;box-sizing:border-box;"></div>
<div class="abs" style="left:63px;top:160px;width:303px;height:36.5px;background:#fff;"></div>
<svg class="abs" style="left:75px;top:167px" width="17" height="20" viewBox="0 0 17 20"><defs><linearGradient id="cubeg" x1="0" y1="0" x2="1" y2="1"><stop offset="0" stop-color="#7fb49c"/><stop offset="1" stop-color="#3f7058"/></linearGradient></defs><path d="M0.600 4.600 L8.500 8.500 L8 19.400 L0.600 15.500 Z" fill="#fdfdfd"/><path d="M0.600 4.600 L8 0.700 L15.700 4 L8.500 8.500 Z" fill="url(#cubeg)"/><path d="M8.500 8.500 L15.700 4 L15.700 14.500 L8 19.400 Z" fill="#2c4c3c"/><text x="1" y="14.500" font-size="7.500" font-weight="bold" font-family="Liberation Sans" fill="#e03048" textLength="5.500" lengthAdjust="spacingAndGlyphs">12</text><path d="M13.300 9 V14.500 M13.300 12 Q10.500 11 10.500 14 Q10.800 16.200 13.300 14.200" fill="none" stroke="#f4f4f4" stroke-width="1.200"/></svg>
<div class="abs" style="left:98px;top:167.700px;font-size:15px;line-height:20px;color:#8e8e92;white-space:nowrap;letter-spacing:0px;">String Inquire</div>
<div class="abs" style="left:213px;top:178px;width:12px;height:1px;background:#666;"></div>
<div class="abs" style="left:271px;top:172.5px;width:12px;height:11.5px;box-sizing:border-box;border:1px solid #dedede;"></div>
<svg class="abs" style="left:329px;top:172px" width="14" height="14" viewBox="0 0 14 14"><path d="M1 1 L13 13 M13 1 L1 13" stroke="#555" stroke-width="1.1"/></svg>
<div class="abs" style="left:69px;top:204px;width:291px;height:22px;box-sizing:border-box;border:2px solid;border-color:#8a8a8a #f8f8f8 #f8f8f8 #8a8a8a;background:#efefef;"></div>
<div class="dbtn" style="left:103px;width:48px;letter-spacing:-0.8px;"><u>P</u>ick</div>
<div class="dbtn" style="left:188px;width:48px;letter-spacing:-0.55px;text-indent:-1px;">Finish</div>
<div class="dbtn" style="left:273px;width:48px;letter-spacing:-0.2px;text-indent:-1px;">Help</div>
<svg class="abs" style="left:351px;top:265px" width="15" height="15" viewBox="0 0 13 13"><path d="M12 2 L2 12 M12 5 L5 12 M12 8 L8 12" stroke="#a8a8a8" stroke-width="1.2"/><path d="M12 3 L3 12 M12 6 L6 12 M12 9 L9 12" stroke="#fff" stroke-width="1"/></svg>
</div>
<div id="info">
<div class="abs" style="left:763px;top:228px;width:144px;height:417px;background:#eeeeee;box-shadow:2px 2px 6px rgba(0,0,0,.4);overflow:hidden;">
<div class="abs" style="left:0;top:0;width:144px;height:38px;background:#fff;"></div>
<div class="abs" style="left:118px;top:9px;width:25px;height:25px;background:#e4e4e4;"></div>
<div class="abs" style="left:125px;top:13px;font-size:14px;color:#f6f6f6;">×</div>
<div class="abs" style="left:10px;top:9px;font-size:15px;line-height:20px;color:#8e8e8e;letter-spacing:0.42px;">Information</div>
<div class="abs" style="left:3px;top:39px;font-size:15px;line-height:20px;color:#1a1a1a;letter-spacing:-0.4px;-webkit-text-stroke:0.3px #1a1a1a;">General</div>
</div>
<div id="irows" class="abs" style="left:0;top:0;width:907px;height:645px;overflow:hidden;pointer-events:none;"><div class="irow" style="top:288.4px;letter-spacing:0.00px">Model = CAD</div><div class="irow" style="top:309.7px;letter-spacing:-0.28px">Name = LINE</div><div class="irow" style="top:331.0px;letter-spacing:-0.31px">Type = Super</div><div class="irow" style="top:352.3px;letter-spacing:-0.11px">Type like = 3d</div><div class="irow" style="top:373.6px;letter-spacing:0.06px">Colour = dark blue</div><div class="irow" style="top:394.9px;letter-spacing:-0.26px">Line style = 1</div><div class="irow" style="top:416.2px;letter-spacing:0.36px">Pt/line = point</div><div class="irow" style="top:437.5px;letter-spacing:-0.20px"># pts = 1</div><div class="irow" style="top:458.8px;letter-spacing:0.05px"># attributes = 3</div><div class="irow" style="top:480.1px;letter-spacing:-0.18px">Length = 0.000</div><div class="irow" style="top:501.4px;letter-spacing:-0.26px">Locks = Read (-1)</div><div class="irow" style="top:522.7px;letter-spacing:0px">Point snap =</div><div class="irow" style="top:544.0px;letter-spacing:-0.75px">X = 212960.191</div><div class="irow" style="top:565.3px;letter-spacing:-0.65px">Y = 612304.048</div><div class="irow" style="top:586.6px;letter-spacing:-0.15px">Prof ch = 0.000</div><div class="irow" style="top:607.9px;letter-spacing:-0.23px">Bearing = 90°</div><div class="irow" style="top:629.2px;letter-spacing:0.00px">+ve =</div></div>
<div class="abs" style="left:761px;top:285px;width:149px;height:132px;box-sizing:border-box;border:4px solid #5358a7;"></div>
<div class="abs" style="left:761px;top:522px;width:147px;height:67px;box-sizing:border-box;border:4px solid #5358a7;"></div>
</div>
<svg id="callouts" class="abs" style="left:0;top:0" width="975" height="743" viewBox="0 0 975 743">
<g fill="#fff" stroke="#5459a8" stroke-width="1.6" stroke-linejoin="miter">
<path d="M63.5 317.5 H92.5 L122 266 L150 317.5 H237 V364 H63.5 Z"/>
<path d="M540 316 H730.5 V329 L761 336 L730.5 357 V397.5 H540 Z"/>
<path d="M326.500 437 H534.500 V450 L608.500 475.700 L534.500 477.200 V517.500 H326.500 Z"/>
<path d="M580 513.5 H731.5 V521 L761.5 528 L731.5 538 V560.5 H580 Z"/>
</g>
<text class="ct" x="149.2" y="336" textLength="145.7" lengthAdjust="spacing">Open a String Inquire</text>
<text class="ct" x="150" y="354"><tspan font-weight="bold">&lt;F2&gt;</tspan> Button</text>
<text class="ct" x="634.5" y="334" textLength="171.1" lengthAdjust="spacing">Information Panel shows</text>
<text class="ct" x="634.7" y="352" textLength="178.2" lengthAdjust="spacing">the new points Model and</text>
<text class="ct" x="635.1" y="370" textLength="146.9" lengthAdjust="spacing">String Name, and the</text>
<text class="ct" x="634.9" y="388" textLength="141.6" lengthAdjust="spacing">Colour and Linestyle</text>
<text class="ct" x="429.5" y="455" textLength="191.0" lengthAdjust="spacing">Newly created 2 Points and</text>
<text class="ct" x="429.5" y="473" textLength="202.1" lengthAdjust="spacing">2 Bearings Intersection Point</text>
<text class="ct" x="429.7" y="491" textLength="170.7" lengthAdjust="spacing">with the settings from the</text>
<text class="ct" x="430.2" y="509" textLength="118.1" lengthAdjust="spacing">CAD Control Bar</text>
<text class="ct" x="655.9" y="531" textLength="72.1" lengthAdjust="spacing">New Point</text>
<text class="ct" x="655.4" y="549" textLength="130.4" lengthAdjust="spacing">X &amp; Y Coordinates</text>
<!-- diamond + cursor -->
<path d="M620.500 465.300 L631 475.700 L620.500 486.200 L610 475.700 Z" fill="none" stroke="#7474cc" stroke-width="1.400"/>
<path d="M615 475.700 H626 M620.500 470 V481.300" stroke="#5a5a5a" stroke-width="1.400" fill="none"/>
<path d="M627.300 477.600 L627.300 493.700 L631.300 490.700 L634.300 496 L637 494.800 L634.800 489.800 L638.800 489 Z" fill="#fff" stroke="#000" stroke-width="1" stroke-linejoin="round"/>
</svg>
</div>
<!-- BOTTOM -->
<div id="bottom">
<div class="abs" style="left:40px;top:658px;width:935px;height:30px;background:#f7f7f7;"></div>
<div class="abs" style="left:37px;top:656.5px;width:940px;height:2px;background:#6c6c6c;"></div>
<div class="abs" style="left:40px;top:688px;width:935px;height:26px;background:#eeeeee;"></div>
<div class="abs" style="left:40px;top:714px;width:935px;height:29px;background:#f6f6f6;"></div>
<div class="abs" style="left:41px;top:658px;width:43px;height:29px;box-sizing:border-box;background:#f3f3f3;border-right:2px solid #6a6a6a;border-bottom:2px solid #6a6a6a;"></div>
<div class="abs" style="left:45px;top:662px;"><svg width="20" height="20" viewBox="0 0 20 20"><rect x="0.700" y="0.700" width="18.600" height="18.600" fill="#e6f0f4" stroke="#c01212" stroke-width="1.300"/><rect x="1.400" y="14.500" width="17.200" height="4" fill="#a8d4d4"/><path d="M6 5 L12 3.5 L16 7 L14.5 12 L8 13 L5 9 Z" fill="#f4f8f8" stroke="#9cc4d4" stroke-width="1.2"/><circle cx="4.5" cy="5" r="1.3" fill="#7030a0"/><circle cx="4.5" cy="9" r="1.3" fill="#3040c0"/><circle cx="4.5" cy="13" r="1.3" fill="#7030a0"/><circle cx="15" cy="13.5" r="1.5" fill="#2030b0"/><path d="M4 16.5h4M6 14.5v4" stroke="#108010" stroke-width="1.4"/><path d="M12.5 16.5h4M14.5 14.5v4" stroke="#e01010" stroke-width="1.4"/><circle cx="10.5" cy="14" r="1.2" fill="#309030"/></svg></div>
<div class="abs" style="left:68px;top:664px;font-size:14px;font-weight:bold;line-height:18px;color:#222;">1</div>
<div class="abs" style="left:89px;top:662px;"><svg width="20" height="20" viewBox="0 0 20 20" preserveAspectRatio="none"><rect x="0.700" y="0.700" width="18.600" height="18.600" fill="#eef2f4" stroke="#1fbf1f" stroke-width="1.400"/><path d="M1.500 14 C4 17.500 7 17 10 13.500 S16 11.500 18.500 13.500 V18.500 H1.500Z" fill="#9fd0cc"/><path d="M1.500 9.500 C4 13 7 12.500 10 9 S16 7 18.500 9 V13 C16 11 13 11 10 13.500 S4 17 1.500 14Z" fill="#cfe4f4"/><path d="M1.500 5 C4 8.500 7 8 10 4.500 S16 2.500 18.500 4.500" fill="none" stroke="#a03030" stroke-width="1.600" stroke-dasharray="3.500 0.500"/><path d="M1.500 9.500 C4 13 7 12.500 10 9 S16 7 18.500 9" fill="none" stroke="#5070c8" stroke-width="1.700"/><path d="M1.500 14 C4 17.500 7 17 10 13.500 S16 11.500 18.500 13.500" fill="none" stroke="#a03030" stroke-width="1.600" stroke-dasharray="3.500 0.500"/></svg></div>
<div class="abs" style="left:111.500px;top:664.500px;font-size:13px;line-height:18px;color:#a0a0a0;">2</div>
<div class="abs" style="left:126px;top:663px;width:1px;height:18px;background:#b0b0b0;"></div>
<div class="abs" style="left:133px;top:662px;"><svg width="20" height="20" viewBox="0 0 20 20"><rect x="0.700" y="0.700" width="18.600" height="18.600" fill="#e6f0f4" stroke="#c01212" stroke-width="1.300"/><rect x="1.400" y="14.500" width="17.200" height="4" fill="#a8d4d4"/><path d="M6 5 L12 3.5 L16 7 L14.5 12 L8 13 L5 9 Z" fill="#f4f8f8" stroke="#9cc4d4" stroke-width="1.2"/><circle cx="4.5" cy="5" r="1.3" fill="#7030a0"/><circle cx="4.5" cy="9" r="1.3" fill="#3040c0"/><circle cx="4.5" cy="13" r="1.3" fill="#7030a0"/><circle cx="15" cy="13.5" r="1.5" fill="#2030b0"/><path d="M4 16.5h4M6 14.5v4" stroke="#108010" stroke-width="1.4"/><path d="M12.5 16.5h4M14.5 14.5v4" stroke="#e01010" stroke-width="1.4"/><circle cx="10.5" cy="14" r="1.2" fill="#309030"/></svg></div>
<div class="abs" style="left:155.500px;top:664.500px;font-size:13px;line-height:18px;color:#a0a0a0;">3</div>
<div class="abs" style="left:170px;top:663px;width:1px;height:18px;background:#b0b0b0;"></div>
<div class="abs" style="left:176px;top:662px;"><svg width="20" height="20" viewBox="0 0 20 20" preserveAspectRatio="none"><rect x="0.700" y="0.700" width="18.600" height="18.600" fill="#eef2f4" stroke="#1fbf1f" stroke-width="1.400"/><path d="M1.500 14 C4 17.500 7 17 10 13.500 S16 11.500 18.500 13.500 V18.500 H1.500Z" fill="#9fd0cc"/><path d="M1.500 9.500 C4 13 7 12.500 10 9 S16 7 18.500 9 V13 C16 11 13 11 10 13.500 S4 17 1.500 14Z" fill="#cfe4f4"/><path d="M1.500 5 C4 8.500 7 8 10 4.500 S16 2.500 18.500 4.500" fill="none" stroke="#a03030" stroke-width="1.600" stroke-dasharray="3.500 0.500"/><path d="M1.500 9.500 C4 13 7 12.500 10 9 S16 7 18.500 9" fill="none" stroke="#5070c8" stroke-width="1.700"/><path d="M1.500 14 C4 17.500 7 17 10 13.500 S16 11.500 18.500 13.500" fill="none" stroke="#a03030" stroke-width="1.600" stroke-dasharray="3.500 0.500"/></svg></div>
<div class="abs" style="left:199px;top:664.500px;font-size:13px;line-height:18px;color:#a0a0a0;letter-spacing:-0.5px;">LS</div>
<div class="abs" style="left:220px;top:663px;width:1px;height:18px;background:#b0b0b0;"></div>
<div class="abs" style="left:43px;top:693px;font-size:15px;line-height:19px;color:#1a1a1a;white-space:nowrap;letter-spacing:-0.13px;-webkit-text-stroke:0.3px #1a1a1a;">searching Model CAD</div>
<div class="abs" style="left:42px;top:717px;width:167px;height:30px;box-sizing:border-box;border:2px solid;border-color:#9c9c9c #fdfdfd #fdfdfd #9c9c9c;background:#f3f3f3;font-size:15px;line-height:23px;padding-left:5px;color:#9c9c9c;letter-spacing:0.2px;-webkit-text-stroke:0.25px #9c9c9c;">Output Window</div>
<div class="abs" style="left:226px;top:717px;width:176px;height:30px;box-sizing:border-box;border:2px solid;border-color:#9c9c9c #fdfdfd #fdfdfd #9c9c9c;background:#f3f3f3;font-size:15px;line-height:23px;padding-left:4.7px;color:#9c9c9c;letter-spacing:-0.3px;-webkit-text-stroke:0.25px #9c9c9c;">Background tasks</div>
</div>
</body>
</html>
